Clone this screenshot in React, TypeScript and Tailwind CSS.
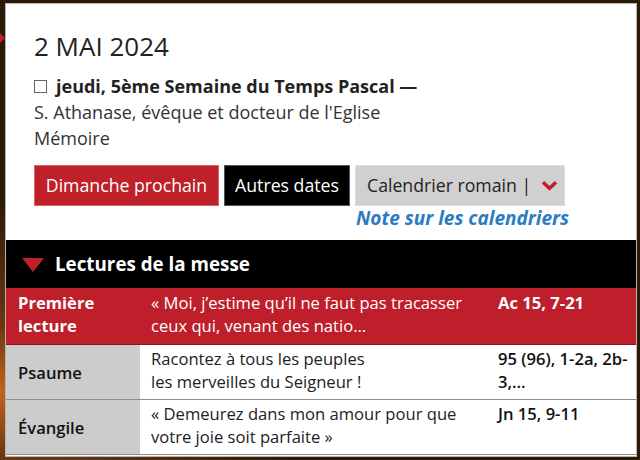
import React from 'react';

const rows = [
  {
    label: ['Première', 'lecture'],
    text: ['« Moi, j’estime qu’il ne faut pas tracasser', 'ceux qui, venant des natio…'],
    ref: ['Ac 15, 7-21'],
    highlight: true,
  },
  {
    label: ['Psaume'],
    text: ['Racontez à tous les peuples', 'les merveilles du Seigneur !'],
    ref: ['95 (96), 1-2a, 2b-', '3,…'],
    highlight: false,
  },
  {
    label: ['Évangile'],
    text: ['« Demeurez dans mon amour pour que', 'votre joie soit parfaite »'],
    ref: ['Jn 15, 9-11'],
    highlight: false,
  },
];

const Chevron = () => (
  <svg width="17" height="11" viewBox="0 0 17 11" className="text-[#c0202a]">
    <path d="M2 2.2 L8.5 8.2 L15 2.2" fill="none" stroke="currentColor" strokeWidth="3.6" strokeLinejoin="miter" />
  </svg>
);

const App: React.FC = () => {
  return (
    <div
      className="relative w-[640px] h-[460px] overflow-hidden bg-[#2a1907] bg-[radial-gradient(ellipse_at_0%_85%,#c2641c_0%,#6b3610_12%,#2a1907_35%)] font-['Open_Sans',sans-serif]"
    >
      {/* red marker on the left edge */}
      <div className="absolute left-0 top-[33px] w-0 h-0 border-y-[5px] border-y-transparent border-l-[5px] border-l-[#c0202a]" />

      <div className="ml-[5px] mt-[3px] w-[632px] h-[454px] bg-white border border-[#b5b5b5] overflow-hidden">
        {/* Date block */}
        <div className="pl-[28px] pt-[24px]">
          <h1 className="text-[26px] leading-[36px] text-[#222]">2 MAI 2024</h1>
          <div className="mt-[9px] text-[18px] leading-[26px] text-[#222]">
            <div className="flex items-center gap-[9px]">
              <span className="inline-block w-[13px] h-[13px] border border-[#666] bg-white" />
              <span className="font-bold">jeudi, 5ème Semaine du Temps Pascal —</span>
            </div>
            <div className="text-[#333]">S. Athanase, évêque et docteur de l'Eglise</div>
            <div className="text-[#333]">Mémoire</div>
          </div>

          {/* Buttons */}
          <div className="mt-[14px] flex items-stretch gap-[5px] text-[17.7px] leading-[25px] whitespace-nowrap">
            <button className="h-[41px] w-[185px] bg-[#c0202a] text-white border border-[#e06068] whitespace-nowrap">
              Dimanche prochain
            </button>
            <button className="h-[41px] w-[126px] bg-black text-white border border-[#555] whitespace-nowrap">
              Autres dates
            </button>
            <button className="h-[41px] w-[210px] pl-[11px] bg-[#d0d0d0] text-[#222] border border-[#ddd] flex items-center gap-[10px] whitespace-nowrap">
              <span>Calendrier romain |</span>
              <Chevron />
            </button>
          </div>
          <div className="w-[535px] text-right text-[19px] leading-[25px] font-bold italic text-[#2a7bbf] whitespace-nowrap">
            Note sur les calendriers
          </div>
        </div>

        {/* Section header */}
        <div className="mt-[9px] h-[48px] bg-black flex items-center gap-[11px] pl-[16px]">
          <span className="w-0 h-0 border-x-[11px] border-x-transparent border-t-[14px] border-t-[#c0202a] mt-[2px]" />
          <span className="text-white font-bold text-[18.8px]">Lectures de la messe</span>
        </div>

        {/* Readings table */}
        <div className="text-[16.6px] leading-[23px]">
          {rows.map((r, i) => (
            <div
              key={i}
              className={
                r.highlight
                  ? 'grid grid-cols-[134px_350px_1fr] h-[57px] bg-[#be1f2b] text-white border-b border-[#8a141c]'
                  : 'grid grid-cols-[134px_350px_1fr] h-[55px] border-b border-[#8c8c8c]'
              }
            >
              <div
                className={
                  r.highlight
                    ? 'pl-[12px] pt-[3px] font-bold'
                    : 'pl-[12px] bg-[#cccccc] text-[#111] font-semibold flex flex-col justify-center'
                }
              >
                {r.label.map((l) => (
                  <div key={l}>{l}</div>
                ))}
              </div>
              <div className={r.highlight ? 'pl-[11px] pt-[3px]' : 'pl-[11px] pt-[2px] text-[#222] bg-white'}>
                {r.text.map((t) => (
                  <div key={t}>{t}</div>
                ))}
              </div>
              <div
                className={
                  r.highlight ? 'pl-[8px] pt-[3px] font-bold' : 'pl-[8px] pt-[2px] text-[#111] font-semibold bg-white'
                }
              >
                {r.ref.map((t) => (
                  <div key={t}>{t}</div>
                ))}
              </div>
            </div>
          ))}
        </div>
      </div>
    </div>
  );
};

export default App;
